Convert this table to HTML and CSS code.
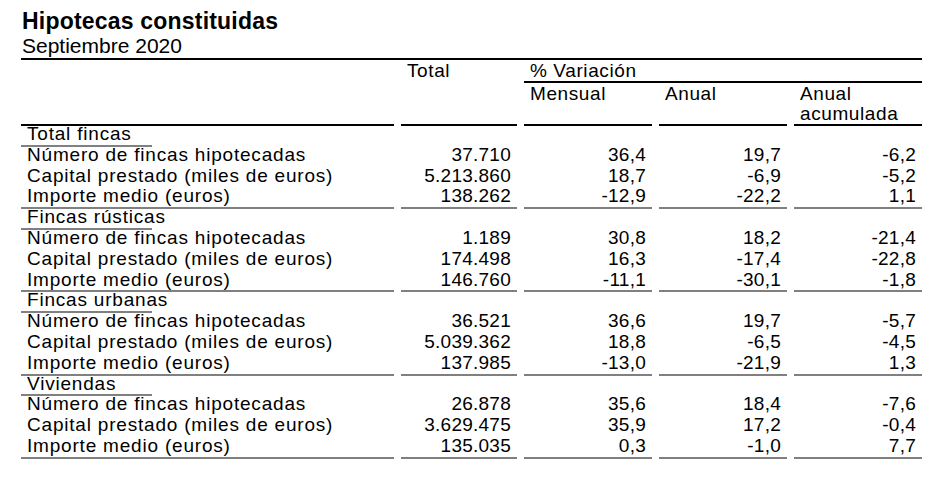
FILE: index.html
```html
<!DOCTYPE html>
<html lang="es">
<head>
<meta charset="utf-8">
<title>Hipotecas constituidas</title>
<link rel="stylesheet" href="styles.css">
</head>
<body>
<div class="page">
  <h1 class="title">Hipotecas constituidas</h1>
  <div class="subtitle">Septiembre 2020</div>
  <div class="table-wrap">
    <table class="stats">
      <colgroup>
        <col class="c-label"><col class="c-total"><col class="c-pct"><col class="c-pct"><col class="c-pct">
      </colgroup>
      <thead>
        <tr class="hrow1">
          <th class="h-blank" rowspan="2"></th>
          <th class="h-total" rowspan="2">Total</th>
          <th class="h-var" colspan="3">% Variación</th>
        </tr>
        <tr class="hrow2">
          <th class="h-sub">Mensual</th>
          <th class="h-sub">Anual</th>
          <th class="h-sub">Anual<br>acumulada</th>
        </tr>
      </thead>
      <tbody>
        <tr class="sec"><td class="sec-cell" colspan="5"><div class="sec-label">Total fincas</div></td></tr>
        <tr><td class="lbl">Número de fincas hipotecadas</td><td class="num">37.710</td><td class="num">36,4</td><td class="num">19,7</td><td class="num">-6,2</td></tr>
        <tr><td class="lbl">Capital prestado (miles de euros)</td><td class="num">5.213.860</td><td class="num">18,7</td><td class="num">-6,9</td><td class="num">-5,2</td></tr>
        <tr class="last"><td class="lbl">Importe medio (euros)</td><td class="num">138.262</td><td class="num">-12,9</td><td class="num">-22,2</td><td class="num">1,1</td></tr>

        <tr class="sec"><td class="sec-cell" colspan="5"><div class="sec-label">Fincas rústicas</div></td></tr>
        <tr><td class="lbl">Número de fincas hipotecadas</td><td class="num">1.189</td><td class="num">30,8</td><td class="num">18,2</td><td class="num">-21,4</td></tr>
        <tr><td class="lbl">Capital prestado (miles de euros)</td><td class="num">174.498</td><td class="num">16,3</td><td class="num">-17,4</td><td class="num">-22,8</td></tr>
        <tr class="last"><td class="lbl">Importe medio (euros)</td><td class="num">146.760</td><td class="num">-11,1</td><td class="num">-30,1</td><td class="num">-1,8</td></tr>

        <tr class="sec"><td class="sec-cell" colspan="5"><div class="sec-label">Fincas urbanas</div></td></tr>
        <tr><td class="lbl">Número de fincas hipotecadas</td><td class="num">36.521</td><td class="num">36,6</td><td class="num">19,7</td><td class="num">-5,7</td></tr>
        <tr><td class="lbl">Capital prestado (miles de euros)</td><td class="num">5.039.362</td><td class="num">18,8</td><td class="num">-6,5</td><td class="num">-4,5</td></tr>
        <tr class="last"><td class="lbl">Importe medio (euros)</td><td class="num">137.985</td><td class="num">-13,0</td><td class="num">-21,9</td><td class="num">1,3</td></tr>

        <tr class="sec"><td class="sec-cell" colspan="5"><div class="sec-label">Viviendas</div></td></tr>
        <tr><td class="lbl">Número de fincas hipotecadas</td><td class="num">26.878</td><td class="num">35,6</td><td class="num">18,4</td><td class="num">-7,6</td></tr>
        <tr><td class="lbl">Capital prestado (miles de euros)</td><td class="num">3.629.475</td><td class="num">35,9</td><td class="num">17,2</td><td class="num">-0,4</td></tr>
        <tr class="last final"><td class="lbl">Importe medio (euros)</td><td class="num">135.035</td><td class="num">0,3</td><td class="num">-1,0</td><td class="num">7,7</td></tr>
      </tbody>
    </table>
  </div>
</div>
</body>
</html>
```

FILE: styles.css
```css
html, body {
  margin: 0;
  padding: 0;
  background: #ffffff;
}

body {
  font-family: "Liberation Sans", Arial, sans-serif;
  color: #000000;
}

.page {
  padding: 9px 0 0 21px;
  width: 901px;
}

.title {
  margin: 0;
  font-size: 23px;
  font-weight: bold;
  line-height: 24px;
  letter-spacing: 0.2px;
  padding-left: 1px;
}

.subtitle {
  font-size: 21px;
  line-height: 24px;
  padding: 1px 0 0 1px;
}

.table-wrap {
  margin-top: 0;
  border-top: 2px solid #000000;
}

.stats {
  table-layout: fixed;
  width: 915px;
  margin: 0 -7px;
  border-collapse: separate;
  border-spacing: 7px 0;
  font-size: 19px;
  letter-spacing: 0.8px;
}

.c-label { width: 373px; }
.c-total { width: 116px; }
.c-pct { width: 128px; }

.stats th {
  font-weight: normal;
  text-align: left;
  vertical-align: top;
  padding: 0 0 0 6px;
  line-height: 20px;
  letter-spacing: 0.6px;
}

.hrow1 th {
  padding-top: 1px;
}

.h-blank,
.h-total,
.h-sub {
  border-bottom: 2px solid #000000;
}

.h-var {
  height: 19px;
  border-bottom: 2px solid #000000;
}

.hrow2 .h-sub {
  height: 39px;
  padding-top: 1px;
}

.stats td {
  padding: 0 6px 4.8px;
  line-height: 16px;
  white-space: nowrap;
}

.lbl {
  text-align: left;
}

.stats .num {
  text-align: right;
  letter-spacing: 0.25px;
  padding-right: 6px;
}

.stats .sec-cell {
  padding: 0;
}

.sec-label {
  width: 125px;
  padding: 0 0 2.8px 6px;
  border-bottom: 2px solid #808080;
}

.stats .last td {
  padding-bottom: 2.8px;
  border-bottom: 2px solid #808080;
}
```
